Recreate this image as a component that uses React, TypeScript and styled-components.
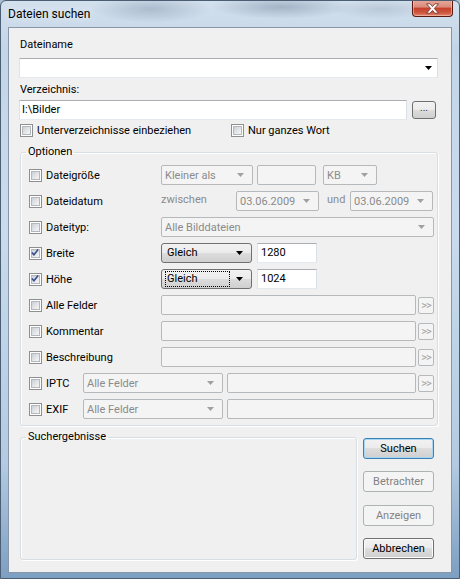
import styled, { createGlobalStyle, css } from 'styled-components';

const GlobalStyle = createGlobalStyle`
  html, body {
    margin: 0;
    padding: 0;
    background: #a9bfd4;
  }
  body {
    font-family: Roboto, "Liberation Sans", sans-serif;
    font-size: 11px;
    color: #000;
  }
  * { box-sizing: border-box; }
`;

const Window = styled.div`
  width: 460px;
  height: 579px;
  display: flex;
  flex-direction: column;
  border: 1px solid #4b5e74;
  border-radius: 6px 6px 0 0;
  padding-bottom: 5px;
  overflow: hidden;
  background:
    radial-gradient(ellipse 60px 14px at 150px 8px, rgba(90, 110, 135, 0.3), transparent),
    radial-gradient(ellipse 70px 12px at 280px 6px, rgba(80, 100, 125, 0.35), transparent),
    radial-gradient(ellipse 50px 10px at 380px 8px, rgba(120, 135, 155, 0.25), transparent),
    linear-gradient(to bottom, #d3e0ed 0%, #c3d6e8 8%, #c9dbec 40%, #b3cbe2 80%, #7d9fc2 100%);
`;

const TitleBar = styled.div`
  height: 26px;
  display: flex;
  align-items: flex-start;
  justify-content: space-between;
  padding-left: 7px;
  padding-right: 6px;
`;

const TitleText = styled.span`
  margin-top: 6px;
  font-size: 12px;
  line-height: 15px;
  color: #000;
  text-shadow: 0 0 8px rgba(255, 255, 255, 0.9);
`;

const CloseButton = styled.div`
  width: 41px;
  height: 17px;
  margin-top: -1px;
  display: flex;
  align-items: center;
  justify-content: center;
  border: 1px solid #5a1a12;
  border-top: none;
  border-radius: 0 0 4px 4px;
  background: linear-gradient(to bottom, #e9a99c 0%, #d98a78 45%, #c5402a 50%, #cf5740 80%, #e08b6f 100%);
  box-shadow: inset 0 0 0 1px rgba(255, 210, 200, 0.5);
`;

const Client = styled.div`
  flex: 1;
  margin: 0 7px;
  border: 1px solid #8796a8;
  background: #f0f0f0;
  padding: 10px 13px 0 10px;
  display: flex;
  flex-direction: column;
`;

const FieldLabel = styled.div<{ $top?: number }>`
  height: 14px;
  line-height: 14px;
  padding-left: 1px;
  margin-top: ${(p) => p.$top ?? 0}px;
`;

const Arrow = ({ color = '#000' }: { color?: string }) => (
  <svg width="7" height="4" viewBox="0 0 7 4">
    <path d="M0 0h7L3.5 4z" fill={color} />
  </svg>
);

const ComboBox = styled.div`
  height: 20px;
  margin-top: 6px;
  background: #fff;
  border: 1px solid #e3e9ef;
  border-top-color: #abadb3;
  border-left-color: #e2e3ea;
  border-right-color: #dbdfe6;
  display: flex;
  align-items: center;
  justify-content: flex-end;
  padding-right: 5px;
`;

const PathRow = styled.div`
  display: flex;
  align-items: center;
  justify-content: space-between;
  margin-top: 3px;
  height: 20px;
`;

const TextInput = styled.div`
  height: 20px;
  flex: 1;
  background: #fff;
  border: 1px solid #e3e9ef;
  border-top-color: #abadb3;
  border-left-color: #e2e3ea;
  border-right-color: #dbdfe6;
  line-height: 18px;
  padding-left: 2px;
`;

const BrowseButton = styled.div`
  width: 24px;
  height: 18px;
  margin-left: 5px;
  margin-right: 2px;
  border: 1px solid #707070;
  border-radius: 3px;
  background: linear-gradient(to bottom, #f2f2f2 0%, #ebebeb 50%, #dddddd 50%, #cfcfcf 100%);
  font-size: 10px;
  line-height: 12px;
  text-align: center;
  color: #333;
`;

const CheckRow = styled.div`
  display: flex;
  align-items: center;
  height: 14px;
  margin-top: 3px;
  padding-left: 1px;
`;

const CheckItem = styled.div<{ $width?: number }>`
  display: flex;
  align-items: center;
  gap: 4px;
  width: ${(p) => (p.$width ? `${p.$width}px` : 'auto')};
  flex: none;
`;

const Box = styled.span`
  width: 13px;
  height: 13px;
  flex: none;
  display: flex;
  align-items: center;
  justify-content: center;
  border: 1px solid #8e8f8f;
  background: #fff;
  padding: 1px;
`;

const BoxInner = styled.span`
  width: 9px;
  height: 9px;
  display: flex;
  align-items: center;
  justify-content: center;
  border: 1px solid #b4b8bd;
  background: linear-gradient(135deg, #cbcfd5 0%, #e6e8eb 60%, #f6f6f6 100%);
`;

const CheckBox = ({ checked }: { checked?: boolean }) => (
  <Box>
    <BoxInner>
      {checked && (
        <svg width="9" height="9" viewBox="0 0 9 9" style={{ marginTop: -1, marginLeft: -1 }}>
          <path d="M1 4.5l2.3 2.6L8 1.2" fill="none" stroke="#3b4e8f" strokeWidth="1.8" />
        </svg>
      )}
    </BoxInner>
  </Box>
);

const Group = styled.fieldset<{ $top: number }>`
  margin: ${(p) => p.$top}px 0 0 1px;
  padding: 0;
  border: 1px solid #d5dfe5;
  border-radius: 3px;
  box-shadow: inset 1px 1px 0 #fff, 1px 1px 0 #fff;
  min-width: 0;
`;

const Legend = styled.legend`
  margin-left: 5px;
  padding: 0 2px;
  line-height: 14px;
  height: 14px;
`;

const GroupBody = styled.div`
  display: flex;
  flex-direction: column;
  gap: 6px;
  padding: 6px 3px 6px 8px;
`;

const OptionRow = styled.div`
  display: flex;
  align-items: center;
  height: 20px;
`;

const disabledFrame = css`
  background: #f4f4f4;
  border: 1px solid #b6b9bc;
  border-radius: 2px;
  color: #8b8b8b;
`;

const Select = styled.div<{ $width?: number; $gap?: number; $active?: boolean }>`
  width: ${(p) => (p.$width ? `${p.$width}px` : 'auto')};
  flex: ${(p) => (p.$width ? 'none' : '1')};
  margin-left: ${(p) => p.$gap ?? 0}px;
  height: 20px;
  display: flex;
  align-items: center;
  justify-content: space-between;
  padding: 0 8px 0 3px;
  ${(p) =>
    p.$active
      ? css`
          border: 1px solid #707070;
          border-radius: 3px;
          background: linear-gradient(to bottom, #f2f2f2 0%, #ebebeb 50%, #dddddd 50%, #cfcfcf 100%);
          color: #000;
        `
      : disabledFrame}
`;

const FocusText = styled.span<{ $focus?: boolean }>`
  flex: 1;
  line-height: 14px;
  padding-left: 1px;
  margin-right: 6px;
  border: 1px dotted ${(p) => (p.$focus ? '#000' : 'transparent')};
`;

const Field = styled.div<{ $width?: number; $gap?: number; $active?: boolean }>`
  width: ${(p) => (p.$width ? `${p.$width}px` : 'auto')};
  flex: ${(p) => (p.$width ? 'none' : '1')};
  margin-left: ${(p) => p.$gap ?? 0}px;
  height: 20px;
  line-height: 18px;
  padding-left: 3px;
  ${(p) =>
    p.$active
      ? css`
          background: #fff;
          border: 1px solid #e3e9ef;
          border-top-color: #abadb3;
          border-left-color: #e2e3ea;
          border-right-color: #dbdfe6;
        `
      : disabledFrame}
`;

const Hint = styled.span<{ $width: number; $pad?: number }>`
  width: ${(p) => p.$width}px;
  flex: none;
  color: #8b8b8b;
  padding-left: ${(p) => p.$pad ?? 0}px;
  margin-top: -3px;
`;

const MoreButton = styled.div`
  width: 16px;
  height: 17px;
  margin-left: 2px;
  flex: none;
  border: 1px solid #b6b9bc;
  border-radius: 2px;
  background: #f4f4f4;
  color: #a0a0a0;
  font-size: 11px;
  line-height: 15px;
  text-align: center;
  letter-spacing: -1px;
`;

const BottomRow = styled.div`
  display: flex;
  align-items: stretch;
  margin-top: 4px;
  height: 130px;
`;

const ResultsGroup = styled(Group)`
  width: 337px;
  flex: none;
`;

const ButtonColumn = styled.div`
  display: flex;
  flex-direction: column;
  justify-content: space-between;
  margin-left: 6px;
  padding: 8px 0 1px;
  width: 71px;
`;

const PushButton = styled.div<{ $variant?: 'default' | 'normal' | 'disabled' }>`
  height: 21px;
  line-height: 19px;
  text-align: center;
  border-radius: 3px;
  ${(p) =>
    p.$variant === 'disabled'
      ? css`
          border: 1px solid #adb2b5;
          background: #f4f4f4;
          color: #838383;
        `
      : css`
          border: 1px solid ${p.$variant === 'default' ? '#3c7fb1' : '#707070'};
          background: linear-gradient(to bottom, #f2f2f2 0%, #ebebeb 50%, #dddddd 50%, #cfcfcf 100%);
          color: #000;
          box-shadow: ${p.$variant === 'default' ? 'inset 0 0 0 1px #a7d8f3' : 'inset 0 0 0 1px #fcfcfc'};
        `}
`;

type Opt = { label: string; checked?: boolean; labelWidth?: number };

const RowLabel = ({ label, checked, labelWidth = 132 }: Opt) => (
  <CheckItem $width={labelWidth}>
    <CheckBox checked={checked} />
    <span>{label}</span>
  </CheckItem>
);

export default function App() {
  return (
    <>
      <GlobalStyle />
      <Window>
        <TitleBar>
          <TitleText>Dateien suchen</TitleText>
          <CloseButton>
            <svg width="15" height="11" viewBox="0 0 15 11">
              <path
                d="M1.5 0.8h3.6l2.4 2.8 2.4-2.8h3.6L9.3 5.5l4.2 4.7H9.9L7.5 7.4 5.1 10.2H1.5l4.2-4.7z"
                fill="#fff"
                stroke="#6a2a20"
                strokeWidth="0.8"
              />
            </svg>
          </CloseButton>
        </TitleBar>

        <Client>
          <FieldLabel>Dateiname</FieldLabel>
          <ComboBox>
            <Arrow />
          </ComboBox>

          <FieldLabel $top={5}>Verzeichnis:</FieldLabel>
          <PathRow>
            <TextInput>I:\Bilder</TextInput>
            <BrowseButton>...</BrowseButton>
          </PathRow>

          <CheckRow>
            <CheckItem $width={211}>
              <CheckBox />
              <span>Unterverzeichnisse einbeziehen</span>
            </CheckItem>
            <CheckItem>
              <CheckBox />
              <span>Nur ganzes Wort</span>
            </CheckItem>
          </CheckRow>

          <Group $top={8}>
            <Legend>Optionen</Legend>
            <GroupBody>
              <OptionRow>
                <RowLabel label="Dateigröße" />
                <Select $width={92}>
                  <span>Kleiner als</span>
                  <Arrow color="#a0a0a0" />
                </Select>
                <Field $width={59} $gap={4} />
                <Select $width={54} $gap={7}>
                  <span>KB</span>
                  <Arrow color="#a0a0a0" />
                </Select>
              </OptionRow>

              <OptionRow>
                <RowLabel label="Dateidatum" />
                <Hint $width={75}>zwischen</Hint>
                <Select $width={83}>
                  <span>03.06.2009</span>
                  <Arrow color="#a0a0a0" />
                </Select>
                <Hint $width={31} $pad={8}>und</Hint>
                <Select $width={83}>
                  <span>03.06.2009</span>
                  <Arrow color="#a0a0a0" />
                </Select>
              </OptionRow>

              <OptionRow>
                <RowLabel label="Dateityp:" />
                <Select>
                  <span>Alle Bilddateien</span>
                  <Arrow color="#a0a0a0" />
                </Select>
              </OptionRow>

              <OptionRow>
                <RowLabel label="Breite" checked />
                <Select $width={91} $active>
                  <FocusText>Gleich</FocusText>
                  <Arrow />
                </Select>
                <Field $width={60} $gap={5} $active>1280</Field>
              </OptionRow>

              <OptionRow>
                <RowLabel label="Höhe" checked />
                <Select $width={91} $active>
                  <FocusText $focus>Gleich</FocusText>
                  <Arrow />
                </Select>
                <Field $width={60} $gap={5} $active>1024</Field>
              </OptionRow>

              {['Alle Felder', 'Kommentar', 'Beschreibung'].map((name) => (
                <OptionRow key={name}>
                  <RowLabel label={name} />
                  <Field />
                  <MoreButton>&gt;&gt;</MoreButton>
                </OptionRow>
              ))}

              <OptionRow>
                <RowLabel label="IPTC" labelWidth={54} />
                <Select $width={140}>
                  <span>Alle Felder</span>
                  <Arrow color="#a0a0a0" />
                </Select>
                <Field $gap={4} />
                <MoreButton>&gt;&gt;</MoreButton>
              </OptionRow>

              <OptionRow>
                <RowLabel label="EXIF" labelWidth={54} />
                <Select $width={140}>
                  <span>Alle Felder</span>
                  <Arrow color="#a0a0a0" />
                </Select>
                <Field $gap={4} />
              </OptionRow>
            </GroupBody>
          </Group>

          <BottomRow>
            <ResultsGroup $top={0}>
              <Legend>Suchergebnisse</Legend>
            </ResultsGroup>
            <ButtonColumn>
              <PushButton $variant="default">Suchen</PushButton>
              <PushButton $variant="disabled">Betrachter</PushButton>
              <PushButton $variant="disabled">Anzeigen</PushButton>
              <PushButton $variant="normal">Abbrechen</PushButton>
            </ButtonColumn>
          </BottomRow>
        </Client>
      </Window>
    </>
  );
}
